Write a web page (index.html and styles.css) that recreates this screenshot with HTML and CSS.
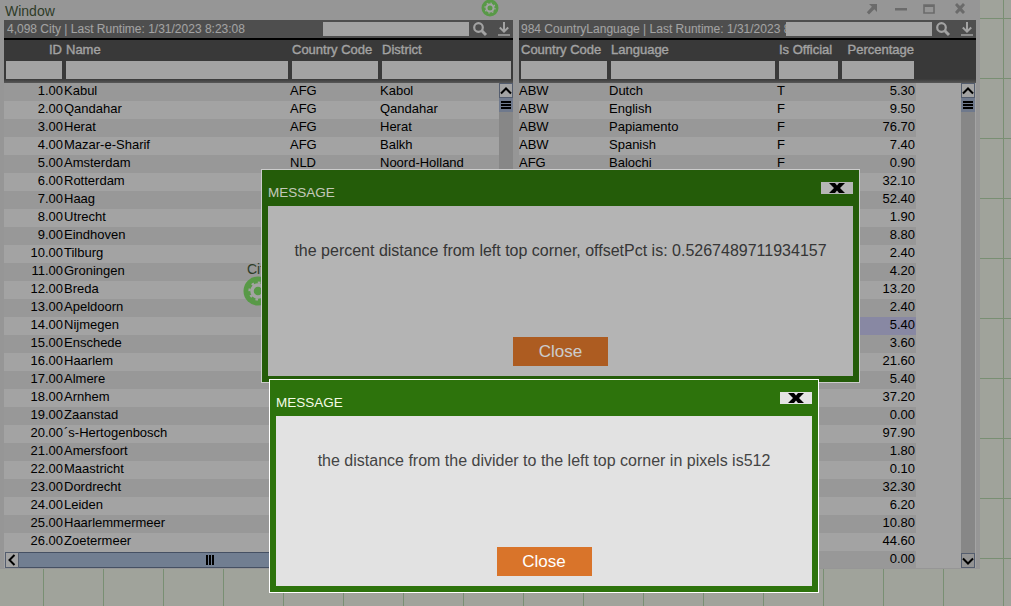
FILE: index.html

```html
<!DOCTYPE html>
<html>
<head>
<title>Window</title>
<link rel="stylesheet" href="styles.css">
</head>
<body>

<div class="window">
  <div class="window-head">
    <span class="window-title">Window</span>
    <svg class="gear" width="18" height="18" viewBox="0 0 18 18"><circle cx="9" cy="9" r="8.500" fill="#8af070"/><circle cx="9" cy="9" r="3.500" fill="none" stroke="#fff" stroke-width="2"/><circle cx="9" cy="9" r="5" fill="none" stroke="#fff" stroke-width="1.200" stroke-dasharray="1.600 2.300"/></svg>
    <svg class="win-btn win-pop" width="12" height="12" viewBox="0 0 12 12"><path d="M3 1h8v8L8.300 6.300 3 11.500 .8 9.200 5.900 3.800z" fill="#a8a8a8"/></svg>
    <svg class="win-btn win-min" width="12" height="12" viewBox="0 0 12 12"><path d="M0 5h12v2.500H0z" fill="#a8a8a8"/></svg>
    <svg class="win-btn win-max" width="12" height="12" viewBox="0 0 12 12"><path d="M1 2h10v8H1z" fill="none" stroke="#a8a8a8" stroke-width="1.600"/><path d="M1 2h10v2H1z" fill="#a8a8a8"/></svg>
    <svg class="win-btn win-close" width="12" height="12" viewBox="0 0 12 12"><path d="M1 2l2-2 3 3 3-3 2 2-3 3.500 3 3.500-2 2-3-3-3 3-2-2 3-3.500z" fill="#a8a8a8"/></svg>
  </div>

  <div class="panels">
    <div class="panel panel-city">
      <div class="panel-title">
        <span class="panel-label">4,098 City | Last Runtime: 1/31/2023 8:23:08</span>
        <input class="search" type="text">
        <svg class="tool" width="16" height="16" viewBox="0 0 16 16"><circle cx="6.500" cy="6.500" r="4.300" fill="none" stroke="#fff" stroke-width="2.200"/><path d="M9.800 9.800l4.200 4.200" stroke="#fff" stroke-width="3"/></svg>
        <svg class="tool" width="16" height="16" viewBox="0 0 16 16"><path d="M8 1v9M3.800 6.500L8 10.700l4.200-4.200" fill="none" stroke="#fff" stroke-width="2"/><path d="M2 14h12" stroke="#fff" stroke-width="1.500"/></svg>
      </div>
      <div class="head-row">
        <div class="col c-id right">ID</div>
        <div class="col c-name">Name</div>
        <div class="col c-code">Country Code</div>
        <div class="col c-district">District</div>
      </div>
      <div class="filter-row">
        <div class="col c-id"><input type="text"></div>
        <div class="col c-name"><input type="text"></div>
        <div class="col c-code"><input type="text"></div>
        <div class="col c-district"><input type="text"></div>
      </div>
      <div class="grid-body">
        <div class="rows">
          <div class="row"><span class="c-id num">1.00</span><span class="c-name">Kabul</span><span class="c-code">AFG</span><span class="c-district">Kabol</span></div>
          <div class="row"><span class="c-id num">2.00</span><span class="c-name">Qandahar</span><span class="c-code">AFG</span><span class="c-district">Qandahar</span></div>
          <div class="row"><span class="c-id num">3.00</span><span class="c-name">Herat</span><span class="c-code">AFG</span><span class="c-district">Herat</span></div>
          <div class="row"><span class="c-id num">4.00</span><span class="c-name">Mazar-e-Sharif</span><span class="c-code">AFG</span><span class="c-district">Balkh</span></div>
          <div class="row"><span class="c-id num">5.00</span><span class="c-name">Amsterdam</span><span class="c-code">NLD</span><span class="c-district">Noord-Holland</span></div>
          <div class="row"><span class="c-id num">6.00</span><span class="c-name">Rotterdam</span></div>
          <div class="row"><span class="c-id num">7.00</span><span class="c-name">Haag</span></div>
          <div class="row"><span class="c-id num">8.00</span><span class="c-name">Utrecht</span></div>
          <div class="row"><span class="c-id num">9.00</span><span class="c-name">Eindhoven</span></div>
          <div class="row"><span class="c-id num">10.00</span><span class="c-name">Tilburg</span></div>
          <div class="row"><span class="c-id num">11.00</span><span class="c-name">Groningen</span></div>
          <div class="row"><span class="c-id num">12.00</span><span class="c-name">Breda</span></div>
          <div class="row"><span class="c-id num">13.00</span><span class="c-name">Apeldoorn</span></div>
          <div class="row"><span class="c-id num">14.00</span><span class="c-name">Nijmegen</span></div>
          <div class="row"><span class="c-id num">15.00</span><span class="c-name">Enschede</span></div>
          <div class="row"><span class="c-id num">16.00</span><span class="c-name">Haarlem</span></div>
          <div class="row"><span class="c-id num">17.00</span><span class="c-name">Almere</span></div>
          <div class="row"><span class="c-id num">18.00</span><span class="c-name">Arnhem</span></div>
          <div class="row"><span class="c-id num">19.00</span><span class="c-name">Zaanstad</span></div>
          <div class="row"><span class="c-id num">20.00</span><span class="c-name">´s-Hertogenbosch</span></div>
          <div class="row"><span class="c-id num">21.00</span><span class="c-name">Amersfoort</span></div>
          <div class="row"><span class="c-id num">22.00</span><span class="c-name">Maastricht</span></div>
          <div class="row"><span class="c-id num">23.00</span><span class="c-name">Dordrecht</span></div>
          <div class="row"><span class="c-id num">24.00</span><span class="c-name">Leiden</span></div>
          <div class="row"><span class="c-id num">25.00</span><span class="c-name">Haarlemmermeer</span></div>
          <div class="row"><span class="c-id num">26.00</span><span class="c-name">Zoetermeer</span></div>
        </div>
        <div class="vscroll">
          <div class="arrow"><svg width="12" height="8" viewBox="0 0 12 8"><path d="M1 6.500l5-5 5 5" fill="none" stroke="#000" stroke-width="2"/></svg></div>
          <div class="vthumb"><i></i><i></i><i></i></div>
        </div>
        <div class="hscroll">
          <div class="arrow"><svg width="8" height="12" viewBox="0 0 8 12"><path d="M6.500 1l-5 5 5 5" fill="none" stroke="#000" stroke-width="2"/></svg></div>
          <div class="hthumb"><i></i><i></i><i></i></div>
        </div>
      </div>
    </div>

    <div class="panel panel-lang">
      <div class="panel-title">
        <span class="panel-label">984 CountryLanguage | Last Runtime: 1/31/2023 8:23:08</span>
        <input class="search" type="text">
        <svg class="tool" width="16" height="16" viewBox="0 0 16 16"><circle cx="6.500" cy="6.500" r="4.300" fill="none" stroke="#fff" stroke-width="2.200"/><path d="M9.800 9.800l4.200 4.200" stroke="#fff" stroke-width="3"/></svg>
        <svg class="tool" width="16" height="16" viewBox="0 0 16 16"><path d="M8 1v9M3.800 6.500L8 10.700l4.200-4.200" fill="none" stroke="#fff" stroke-width="2"/><path d="M2 14h12" stroke="#fff" stroke-width="1.500"/></svg>
      </div>
      <div class="head-row">
        <div class="col l-code">Country Code</div>
        <div class="col l-lang">Language</div>
        <div class="col l-off">Is Official</div>
        <div class="col l-pct right">Percentage</div>
      </div>
      <div class="filter-row">
        <div class="col l-code"><input type="text"></div>
        <div class="col l-lang"><input type="text"></div>
        <div class="col l-off"><input type="text"></div>
        <div class="col l-pct"><input type="text"></div>
      </div>
      <div class="grid-body">
        <div class="rows">
          <div class="row"><span class="l-code">ABW</span><span class="l-lang">Dutch</span><span class="l-off">T</span><span class="l-pct num">5.30</span></div>
          <div class="row"><span class="l-code">ABW</span><span class="l-lang">English</span><span class="l-off">F</span><span class="l-pct num">9.50</span></div>
          <div class="row"><span class="l-code">ABW</span><span class="l-lang">Papiamento</span><span class="l-off">F</span><span class="l-pct num">76.70</span></div>
          <div class="row"><span class="l-code">ABW</span><span class="l-lang">Spanish</span><span class="l-off">F</span><span class="l-pct num">7.40</span></div>
          <div class="row"><span class="l-code">AFG</span><span class="l-lang">Balochi</span><span class="l-off">F</span><span class="l-pct num">0.90</span></div>
          <div class="row"><span class="l-gap"></span><span class="l-pct num">32.10</span></div>
          <div class="row"><span class="l-gap"></span><span class="l-pct num">52.40</span></div>
          <div class="row"><span class="l-gap"></span><span class="l-pct num">1.90</span></div>
          <div class="row"><span class="l-gap"></span><span class="l-pct num">8.80</span></div>
          <div class="row"><span class="l-gap"></span><span class="l-pct num">2.40</span></div>
          <div class="row"><span class="l-gap"></span><span class="l-pct num">4.20</span></div>
          <div class="row"><span class="l-gap"></span><span class="l-pct num">13.20</span></div>
          <div class="row"><span class="l-gap"></span><span class="l-pct num">2.40</span></div>
          <div class="row"><span class="l-gap"></span><span class="l-pct num selected">5.40</span></div>
          <div class="row"><span class="l-gap"></span><span class="l-pct num">3.60</span></div>
          <div class="row"><span class="l-gap"></span><span class="l-pct num">21.60</span></div>
          <div class="row"><span class="l-gap"></span><span class="l-pct num">5.40</span></div>
          <div class="row"><span class="l-gap"></span><span class="l-pct num">37.20</span></div>
          <div class="row"><span class="l-gap"></span><span class="l-pct num">0.00</span></div>
          <div class="row"><span class="l-gap"></span><span class="l-pct num">97.90</span></div>
          <div class="row"><span class="l-gap"></span><span class="l-pct num">1.80</span></div>
          <div class="row"><span class="l-gap"></span><span class="l-pct num">0.10</span></div>
          <div class="row"><span class="l-gap"></span><span class="l-pct num">32.30</span></div>
          <div class="row"><span class="l-gap"></span><span class="l-pct num">6.20</span></div>
          <div class="row"><span class="l-gap"></span><span class="l-pct num">10.80</span></div>
          <div class="row"><span class="l-gap"></span><span class="l-pct num">44.60</span></div>
          <div class="row"><span class="l-gap"></span><span class="l-pct num">0.00</span></div>
        </div>
        <div class="vscroll">
          <div class="arrow"><svg width="12" height="8" viewBox="0 0 12 8"><path d="M1 6.500l5-5 5 5" fill="none" stroke="#000" stroke-width="2"/></svg></div>
          <div class="vthumb"><i></i><i></i><i></i></div>
          <div class="arrow arrow-end"><svg width="12" height="8" viewBox="0 0 12 8"><path d="M1 1.500l5 5 5-5" fill="none" stroke="#000" stroke-width="2"/></svg></div>
        </div>
      </div>
    </div>
  </div>

  <div class="hover-tool">
    <span>City</span>
    <svg width="30" height="30" viewBox="0 0 30 30"><circle cx="15" cy="15" r="14.500" fill="#8af070"/><circle cx="15" cy="15" r="6" fill="none" stroke="#fff" stroke-width="3.500"/><circle cx="15" cy="15" r="8.500" fill="none" stroke="#fff" stroke-width="2.200" stroke-dasharray="2.600 4"/></svg>
  </div>
</div>

<div class="shade"></div>

<div class="dialog dialog-first">
  <div class="dialog-title">
    <span>MESSAGE</span>
    <button class="dialog-x"><svg width="16" height="10" viewBox="0 0 16 10"><path d="M0 0h6l2 2.500L10 0h6l-5 5 5 5h-6L8 7.500 6 10H0l5-5z" fill="#000"/></svg></button>
  </div>
  <div class="dialog-body">
    <p>the percent distance from left top corner, offsetPct is: 0.5267489711934157</p>
    <button class="dialog-close">Close</button>
  </div>
</div>

<div class="shade"></div>

<div class="dialog dialog-second">
  <div class="dialog-title">
    <span>MESSAGE</span>
    <button class="dialog-x"><svg width="16" height="10" viewBox="0 0 16 10"><path d="M0 0h6l2 2.500L10 0h6l-5 5 5 5h-6L8 7.500 6 10H0l5-5z" fill="#000"/></svg></button>
  </div>
  <div class="dialog-body">
    <p>the distance from the divider to the left top corner in pixels is512</p>
    <button class="dialog-close">Close</button>
  </div>
</div>

</body>
</html>
```

FILE: styles.css

```css
html, body {
  margin: 0;
  height: 100%;
  overflow: hidden;
}

body {
  position: relative;
  font-family: "Liberation Sans", Arial, sans-serif;
  background-color: #fbfff3;
  background-image:
    linear-gradient(to right, #bfe0b4 1px, transparent 1px),
    linear-gradient(to bottom, #bfe0b4 1px, transparent 1px);
  background-size: 60px 60px;
  background-position: 43px 18px;
}

.window {
  position: absolute;
  left: 0;
  top: 0;
  width: 980px;
  height: 569px;
  background: #ececec;
  box-sizing: border-box;
  padding: 0 4px;
}

.window-head {
  position: relative;
  height: 20px;
}

.window-title {
  position: absolute;
  left: 1px;
  top: 3px;
  font-size: 14px;
  color: #49603f;
}

.gear {
  position: absolute;
  left: 477px;
  top: -1px;
}

.win-btn {
  position: absolute;
  top: 3px;
}

.win-pop { left: 862px; }
.win-min { left: 891px; }
.win-max { left: 919px; }
.win-close { left: 950px; }

.panels {
  display: flex;
  gap: 6px;
}

.panel {
  flex: none;
}

.panel-city { width: 509px; }
.panel-lang { width: 457px; }

.panel-title {
  display: flex;
  align-items: center;
  height: 18px;
  background: #7b7b7b;
  border-bottom: 2px solid #000;
  padding-left: 2px;
}

.panel-city .panel-title {
  padding-left: 3px;
}

.panel-label {
  flex: 1;
  min-width: 0;
  overflow: hidden;
  white-space: nowrap;
  font-size: 12px;
  color: #fff;
}

.search {
  flex: none;
  width: 146px;
  height: 14px;
  border: 0;
  padding: 0;
  background: #fff;
  margin-right: 3px;
}

.tool {
  flex: none;
  width: 16px;
  height: 16px;
}

.tool + .tool {
  margin-left: 8px;
  margin-right: 1px;
}

.head-row {
  display: flex;
  height: 21px;
  line-height: 20px;
  background: #5b5b5b;
  color: #fff;
  font-size: 13px;
  -webkit-text-stroke: 0.3px #fff;
  white-space: nowrap;
}

.filter-row {
  display: flex;
  height: 22px;
  background: linear-gradient(to bottom, #5b5b5b 18px, #8a8a8a 22px);
}

.filter-row .col {
  box-sizing: border-box;
  padding: 0 2px;
}

.filter-row input {
  display: block;
  box-sizing: border-box;
  width: 100%;
  height: 18px;
  border: 0;
  padding: 0;
  background: #fff;
}

.head-row .col {
  box-sizing: border-box;
  padding-left: 2px;
}

.head-row .right {
  text-align: right;
  padding-right: 2px;
}

.c-id { width: 60px; flex: none; }
.c-name { width: 226px; flex: none; }
.c-code { width: 90px; flex: none; }
.c-district { width: 133px; flex: none; }

.l-code { width: 90px; flex: none; }
.l-lang { width: 168px; flex: none; }
.l-off { width: 63px; flex: none; }
.l-pct { width: 76px; flex: none; }
.l-gap { width: 321px; flex: none; }

.grid-body {
  position: relative;
  height: 485px;
  background: #fff;
  overflow: hidden;
  font-size: 13px;
}

.rows {
  overflow: hidden;
  height: 100%;
}

.row {
  display: flex;
  height: 18px;
  line-height: 16px;
  color: #000;
  white-space: nowrap;
}

.panel-city .row:nth-child(odd) { background: #eeeeee; }
.panel-city .row:nth-child(even) { background: #ffffff; }
.panel-lang .row:nth-child(odd) { background: linear-gradient(to right, #eeeeee 397px, transparent 397px); }

.num {
  text-align: right;
  box-sizing: border-box;
  padding-right: 1px;
}

.selected {
  background: #d6d6ff;
}

.vscroll {
  position: absolute;
  right: 1px;
  top: 0;
  bottom: 0;
  width: 14px;
  background: #d4d4d4;
  display: flex;
  flex-direction: column;
}

.panel-city .vscroll {
  right: 0;
  bottom: 16px;
}

.arrow {
  flex: none;
  width: 14px;
  height: 15px;
  display: flex;
  align-items: center;
  justify-content: center;
  background: #fff;
  box-sizing: border-box;
  border: 1px solid #8593ad;
}

.arrow-end {
  margin-top: auto;
  background: #e6e6e6;
}

.vthumb {
  height: 14px;
  background: #aebfdc;
  display: flex;
  flex-direction: column;
  justify-content: center;
  gap: 1px;
  align-items: center;
}

.vthumb i {
  display: block;
  width: 10px;
  height: 2px;
  background: #000;
}

.hscroll {
  position: absolute;
  left: 1px;
  right: 0;
  bottom: 0;
  height: 16px;
  display: flex;
  background: #d4d4d4;
}

.hscroll .arrow {
  height: 16px;
}

.hthumb {
  flex: 1;
  background: #b2c6e4;
  display: flex;
  justify-content: center;
  align-items: center;
  gap: 1px;
  padding-right: 112px;
  border: solid #6d7f9c;
  border-width: 1px 0;
  box-sizing: border-box;
}

.hthumb i {
  display: block;
  width: 2px;
  height: 10px;
  background: #000;
}

.hover-tool {
  position: absolute;
  left: 243px;
  top: 262px;
  font-size: 14px;
  color: #49603f;
}

.hover-tool span {
  display: block;
  line-height: 14px;
  margin-left: 4px;
}

.hover-tool svg {
  display: block;
}

.shade {
  position: absolute;
  inset: 0;
  background: rgba(0, 0, 0, 0.2);
}

.dialog {
  position: absolute;
  box-sizing: border-box;
  background: #2d730c;
  border: 1px solid #fff;
  padding: 0 6px 6px;
  display: flex;
  flex-direction: column;
}

.dialog-first {
  left: 261px;
  top: 169px;
  width: 599px;
  height: 214px;
}

.dialog-second {
  left: 269px;
  top: 379px;
  width: 550px;
  height: 214px;
}

.dialog-title {
  flex: none;
  height: 36px;
  display: flex;
  align-items: center;
  justify-content: space-between;
  color: #f4fbe6;
  font-size: 13.500px;
  padding-top: 8px;
  box-sizing: border-box;
}

.dialog-x {
  display: flex;
  align-items: center;
  justify-content: center;
  width: 32px;
  height: 12px;
  border: 0;
  padding: 0;
  background: #e4e4e4;
  margin-top: -8px;
}

.dialog-body {
  flex: 1;
  background: #e2e2e2;
  display: flex;
  flex-direction: column;
  align-items: center;
  color: #444;
}

.dialog-body p {
  margin: 35px 0 0;
  font-size: 16px;
  line-height: 20px;
}

.dialog-close {
  margin-top: auto;
  margin-bottom: 10px;
  width: 95px;
  height: 29px;
  border: 0;
  padding: 0;
  background: #d9742a;
  color: #fff;
  font-family: "Liberation Sans", Arial, sans-serif;
  font-size: 17px;
}
```
